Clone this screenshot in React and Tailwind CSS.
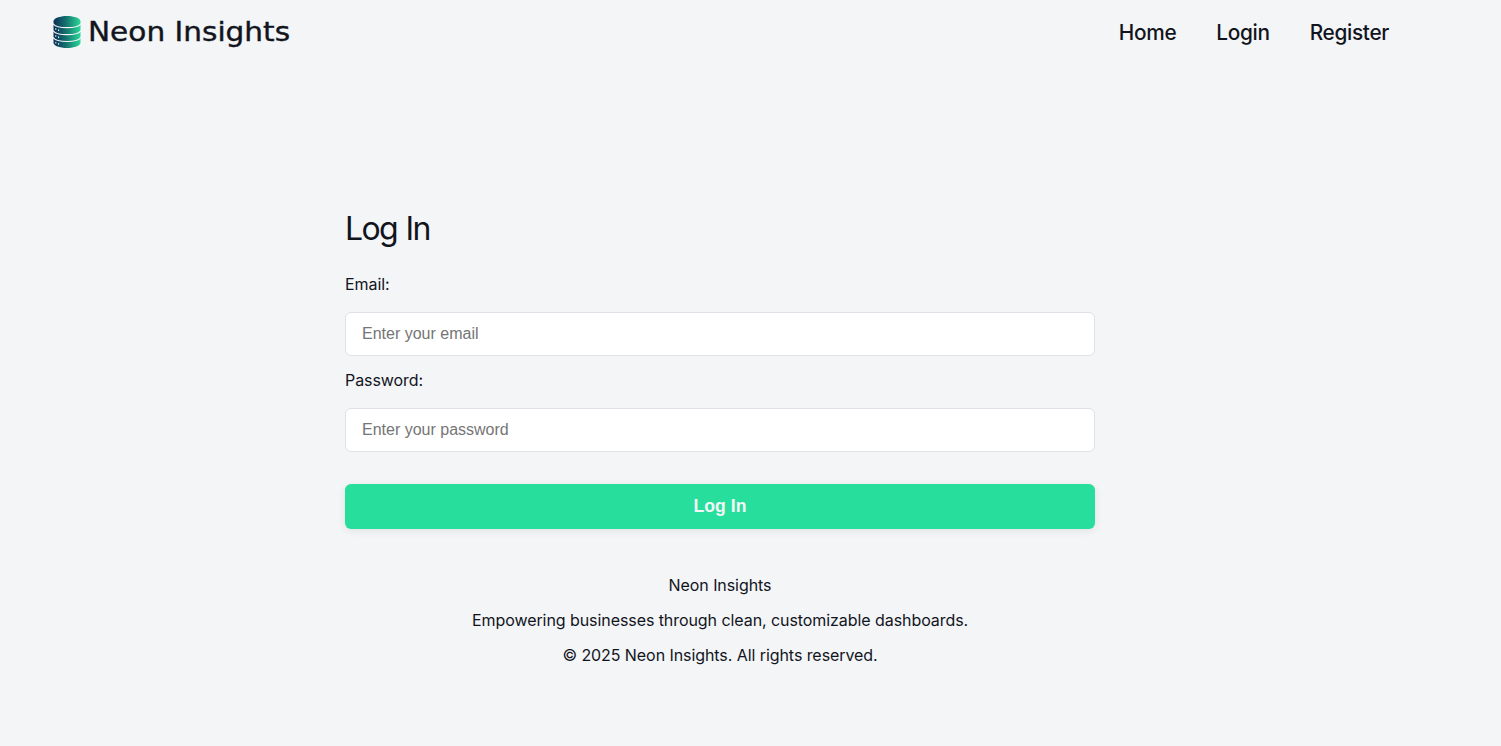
function Logo() {
  return (
    <svg className="h-8 w-7 shrink-0" viewBox="0 0 28 32" fill="none">
      <defs>
        <linearGradient id="disk" x1="0" y1="0" x2="28" y2="0" gradientUnits="userSpaceOnUse">
          <stop offset="0" stopColor="#0b2a55" />
          <stop offset="0.45" stopColor="#14706f" />
          <stop offset="1" stopColor="#2bdc98" />
        </linearGradient>
      </defs>
      <path d="M.5 5.5C.5 2.3 6.500 0 14 0s13.500 2.300 13.500 5.500V26.500c0 3.200-6 5.500-13.500 5.500S.5 29.700.5 26.500Z" fill="url(#disk)" />
      <g stroke="#f3f5f7" strokeWidth="1.200">
        <path d="M0 7.500c1.500 2.700 7 4.200 14 4.200s12.500-1.500 14-4.200" />
        <path d="M0 14.500c1.500 2.700 7 4.200 14 4.200s12.500-1.500 14-4.200" />
        <path d="M0 21.300c1.500 2.700 7 4.200 14 4.200s12.500-1.500 14-4.200" />
      </g>
      <g fill="#d9e8ee">
        <ellipse cx="2.800" cy="13" rx=".6" ry=".9" />
        <ellipse cx="5.600" cy="14.200" rx=".6" ry=".9" />
        <ellipse cx="2.800" cy="20" rx=".6" ry=".9" />
        <ellipse cx="5.600" cy="21.200" rx=".6" ry=".9" />
        <ellipse cx="2.800" cy="26.700" rx=".6" ry=".9" />
        <ellipse cx="5.600" cy="27.900" rx=".6" ry=".9" />
      </g>
    </svg>
  );
}

function Field({ id, label, type, placeholder }) {
  return (
    <div className="flex flex-col">
      <label htmlFor={id} className="h-6 leading-6 tracking-[-0.07px]">{label}</label>
      <input
        id={id}
        type={type}
        placeholder={placeholder}
        className="mt-4 h-11 w-full rounded-md border border-[#dee2e6] bg-white px-4 font-['Liberation_Sans',Arial,sans-serif] text-base placeholder:text-[#757575]"
      />
    </div>
  );
}

export default function App() {
  return (
    <div className="min-h-[746px] bg-[#f3f5f7] font-[Inter,sans-serif] text-base text-[#12141d]">
      <header className="flex h-16 items-center justify-between pl-[53px] pr-28">
        <a href="#" className="flex items-center gap-1.5">
          <Logo />
          <span className="ml-px inline-block origin-left scale-x-[1.095] whitespace-nowrap font-['DejaVu_Sans',sans-serif] text-[27px] leading-8 [-webkit-text-stroke:0.4px_#12141d]">Neon Insights</span>
        </a>
        <nav className="flex gap-10 pt-px text-[20.8px] font-medium leading-8 tracking-[-0.32px]">
          <a href="#">Home</a>
          <a href="#">Login</a>
          <a href="#">Register</a>
        </nav>
      </header>
      <main className="ml-[345px] w-[750px] pt-[144px]">
        <h1 className="h-10 text-[32px] leading-[41px] tracking-[-1.6px] [word-spacing:1px]">Log In</h1>
        <form className="flex flex-col gap-3 pt-6" onSubmit={(e) => e.preventDefault()}>
          <Field id="email" label="Email:" type="email" placeholder="Enter your email" />
          <Field id="password" label="Password:" type="password" placeholder="Enter your password" />
          <button className="mt-5 h-[45px] rounded-md bg-[#28de9d] font-['Liberation_Sans',Arial,sans-serif] text-[17.6px] font-bold text-[#f3f5f7] shadow-[0_2px_8px_rgba(0,0,0,0.08)]">Log In</button>
        </form>
        <footer className="flex flex-col gap-[11px] pt-11 text-center leading-6 tracking-[-0.07px]">
          <p>Neon Insights</p>
          <p>Empowering businesses through clean, customizable dashboards.</p>
          <p>© 2025 Neon Insights. All rights reserved.</p>
        </footer>
      </main>
    </div>
  );
}
